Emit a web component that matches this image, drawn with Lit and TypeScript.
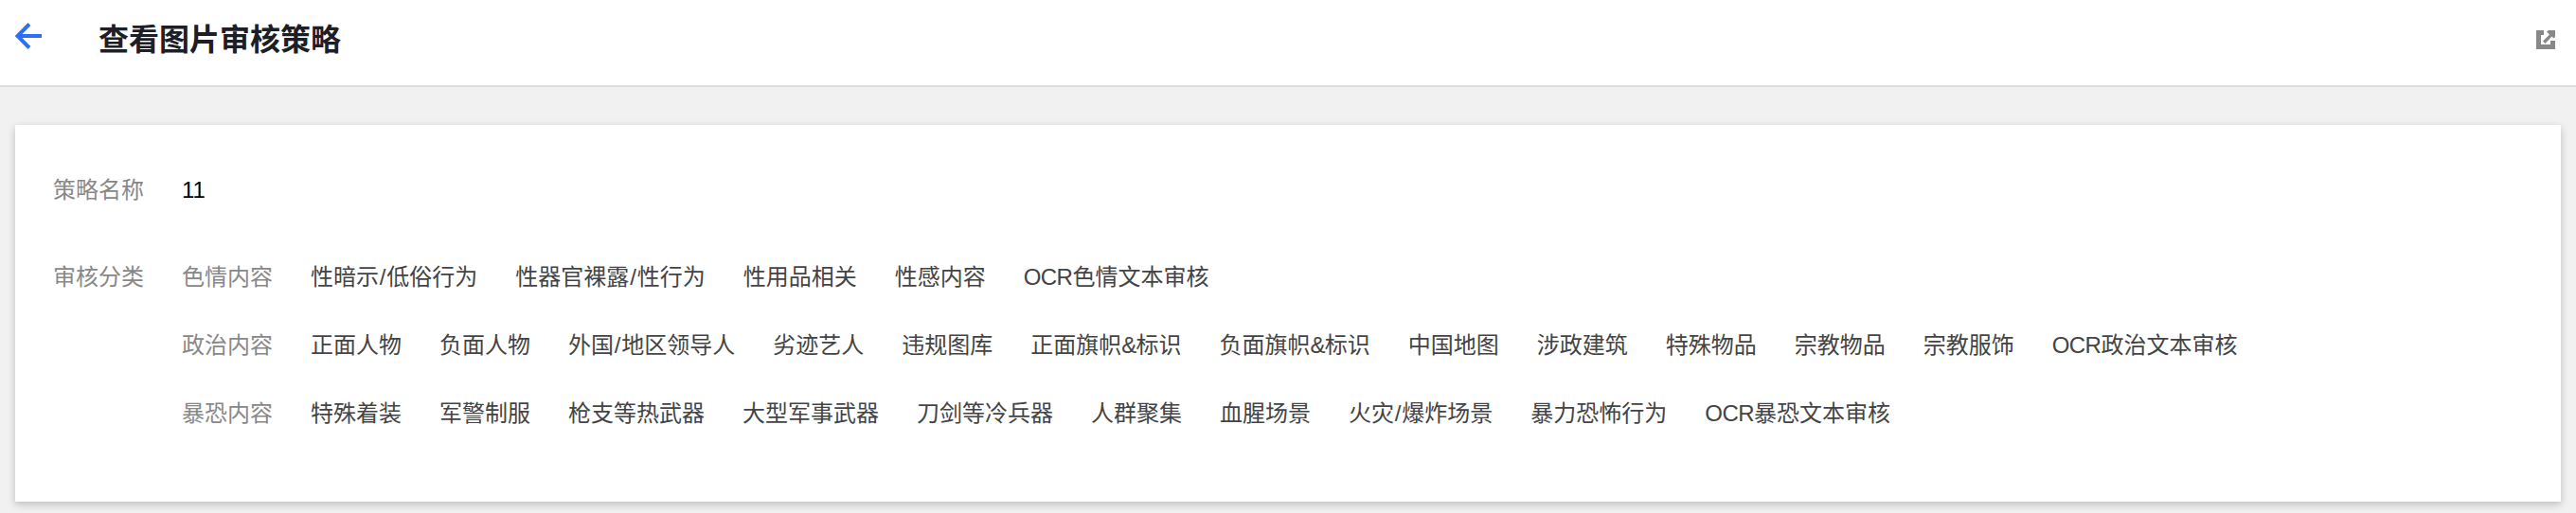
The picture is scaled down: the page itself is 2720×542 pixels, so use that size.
import { LitElement, html, css } from "lit";
import { customElement } from "lit/decorators.js";

const groups: [string, string[]][] = [
  ["色情内容", ["性暗示/低俗行为", "性器官裸露/性行为", "性用品相关", "性感内容", "OCR色情文本审核"]],
  ["政治内容", ["正面人物", "负面人物", "外国/地区领导人", "劣迹艺人", "违规图库", "正面旗帜&标识", "负面旗帜&标识", "中国地图", "涉政建筑", "特殊物品", "宗教物品", "宗教服饰", "OCR政治文本审核"]],
  ["暴恐内容", ["特殊着装", "军警制服", "枪支等热武器", "大型军事武器", "刀剑等冷兵器", "人群聚集", "血腥场景", "火灾/爆炸场景", "暴力恐怖行为", "OCR暴恐文本审核"]],
];

const latinClass: Record<string, string> = { "/": "slash", "&": "amp", OCR: "ocr" };

const itemParts = (text: string) =>
  text
    .split(/(OCR|\/|&)/)
    .filter(Boolean)
    .map((part) =>
      latinClass[part] ? html`<span class=${latinClass[part]}>${part}</span>` : part
    );

@customElement("app-root")
export class AppRoot extends LitElement {
  static styles = css`
    :host {
      display: block;
      height: 542px;
      background: #f1f1f1;
      font-family: "Liberation Sans", "Noto Sans CJK SC", sans-serif;
      font-size: 24px;
      line-height: 32px;
      overflow: hidden;
    }
    .header {
      box-sizing: border-box;
      height: 92px;
      background: #fff;
      border-bottom: 2px solid #ddd;
      display: flex;
      align-items: flex-start;
      padding: 0 22px 0 16px;
    }
    .back { width: 28px; height: 28px; margin-top: 24px; flex: none; }
    .title {
      margin: 20px 0 0 60px;
      font-size: 32px;
      line-height: 44px;
      font-weight: 700;
      color: #1c2026;
      flex: 1;
    }
    .open { width: 20px; height: 20px; margin-top: 32px; flex: none; }
    .card {
      box-sizing: border-box;
      margin: 40px 16px 0;
      height: 398px;
      padding: 53px 40px 0;
      background: #fff;
      box-shadow: 0 3px 8px rgba(0, 0, 0, 0.22);
    }
    .row { display: flex; }
    .row + .row { margin-top: 60px; }
    .label { width: 96px; margin-right: 40px; color: #888; flex: none; }
    .value { color: #000; }
    .groups { display: flex; flex-direction: column; gap: 40px; }
    .group { display: flex; gap: 40px; white-space: nowrap; }
    .gname { color: #888; }
    .item { color: #444; }
    .slash { padding: 0 0.85px; }
    .amp { letter-spacing: -0.85px; }
    .ocr { letter-spacing: -0.55px; }
  `;

  render() {
    return html`
      <div class="header">
        <svg class="back" viewBox="0 0 28 28" fill="none" stroke="#2d6ff5" stroke-width="4">
          <path d="M2 14H28" />
          <path d="M15 1.5L2.5 14L15 26.5" />
        </svg>
        <div class="title">查看图片审核策略</div>
        <svg class="open" viewBox="0 0 20 20">
          <path fill="#888" d="M0 0H8V5H5V15H15V11H20V20H0Z" />
          <path fill="#888" d="M11 1.5L13 0H20V7L18.5 8.5L16.5 6.5L9.5 14L7 11.5L14 4.5Z" />
        </svg>
      </div>
      <div class="card">
        <div class="row">
          <div class="label">策略名称</div>
          <div class="value">11</div>
        </div>
        <div class="row">
          <div class="label">审核分类</div>
          <div class="groups">
            ${groups.map(
              ([name, items]) => html`
                <div class="group">
                  <span class="gname">${name}</span>
                  ${items.map((i) => html`<span class="item">${itemParts(i)}</span>`)}
                </div>
              `
            )}
          </div>
        </div>
      </div>
    `;
  }
}
